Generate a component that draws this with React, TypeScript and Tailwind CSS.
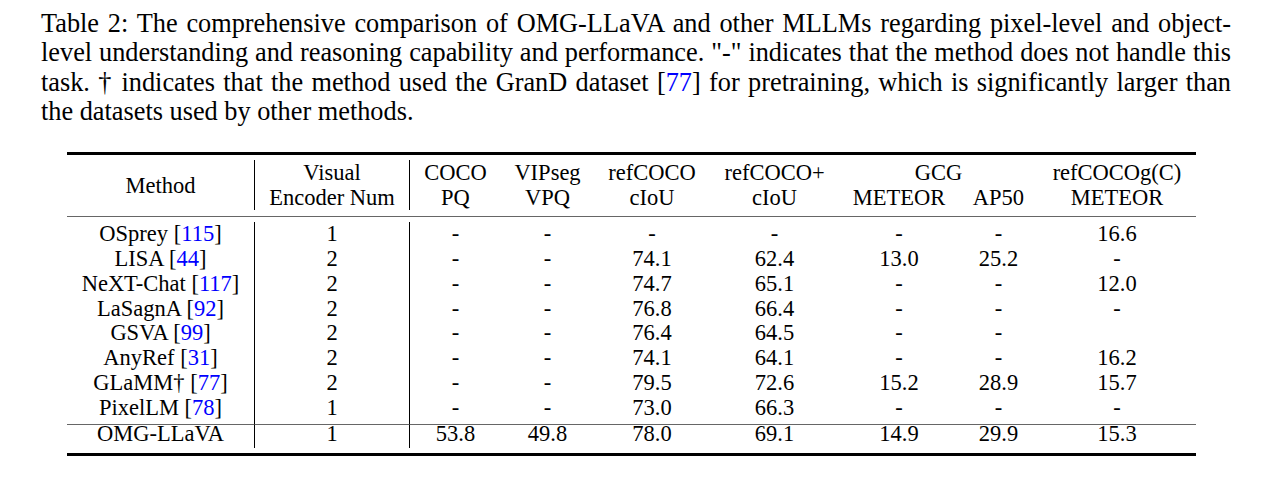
import React from 'react';

const cols = "grid grid-cols-[188px_155px_91px_93px_116px_129px_120px_79px_158px]";

type Row = { name: string; cite?: string; vals: string[] };

const rows: Row[] = [
  { name: "OSprey", cite: "115", vals: ["1", "-", "-", "-", "-", "-", "-", "16.6"] },
  { name: "LISA", cite: "44", vals: ["2", "-", "-", "74.1", "62.4", "13.0", "25.2", "-"] },
  { name: "NeXT-Chat", cite: "117", vals: ["2", "-", "-", "74.7", "65.1", "-", "-", "12.0"] },
  { name: "LaSagnA", cite: "92", vals: ["2", "-", "-", "76.8", "66.4", "-", "-", "-"] },
  { name: "GSVA", cite: "99", vals: ["2", "-", "-", "76.4", "64.5", "-", "-", ""] },
  { name: "AnyRef", cite: "31", vals: ["2", "-", "-", "74.1", "64.1", "-", "-", "16.2"] },
  { name: "GLaMM†", cite: "77", vals: ["2", "-", "-", "79.5", "72.6", "15.2", "28.9", "15.7"] },
  { name: "PixelLM", cite: "78", vals: ["1", "-", "-", "73.0", "66.3", "-", "-", "-"] },
];

const ours: Row = { name: "OMG-LLaVA", vals: ["1", "53.8", "49.8", "78.0", "69.1", "14.9", "29.9", "15.3"] };

function Cite({ n }: { n: string }) {
  return (
    <>
      [<span className="text-[#0000ff]">{n}</span>]
    </>
  );
}

export default function App() {
  return (
    <div className="bg-white min-h-[480px] font-['Liberation_Serif',serif] text-black">
      {/* Caption */}
      <div className="pt-[9px] pl-[41px] w-[1231px] text-[26.3px] leading-[29.3px]">
        <div className="text-justify [text-align-last:justify]">
          Table 2: The comprehensive comparison of OMG-LLaVA and other MLLMs regarding pixel-level and object-
        </div>
        <div className="text-justify [text-align-last:justify]">
          level understanding and reasoning capability and performance. "-" indicates that the method does not handle this
        </div>
        <div className="text-justify [text-align-last:justify]">
          task. † indicates that the method used the GranD dataset <Cite n="77" /> for pretraining, which is significantly larger than
        </div>
        <div>the datasets used by other methods.</div>
      </div>

      {/* Table */}
      <div className="mt-[26px] ml-[67px] w-[1129px] text-[22.5px]">
        <div className="h-[3px] bg-black" />

        <div className={`${cols} grid-rows-[25px_25px] leading-[25px] pt-[5px] pb-[5.5px] text-center`}>
          <div className="row-span-2 flex items-center justify-center border-r border-black">Method</div>
          <div className="row-span-2 flex flex-col items-center justify-center border-r border-black">
            <span>Visual</span>
            <span>Encoder Num</span>
          </div>
          <div className="row-span-2">COCO<br />PQ</div>
          <div className="row-span-2">VIPseg<br />VPQ</div>
          <div className="row-span-2">refCOCO<br />cIoU</div>
          <div className="row-span-2">refCOCO+<br />cIoU</div>
          <div className="col-span-2">GCG</div>
          <div className="row-span-2">refCOCOg(C)<br />METEOR</div>
          <div>METEOR</div>
          <div>AP50</div>
        </div>

        <div className="h-[1.5px] bg-[#666]" />

        <div className={`${cols} pt-[5px] pb-[5px] text-center`}>
          {rows.map((r, i) => {
            const last = i === rows.length - 1;
            const cell = `leading-[24.8px] ${last ? "pb-[3px]" : ""}`;
            return (
              <React.Fragment key={r.name}>
                <div className={`${cell} border-r border-black`}>
                  {r.name} <Cite n={r.cite!} />
                </div>
                {r.vals.map((v, j) => (
                  <div key={j} className={`${cell} ${j === 0 ? "border-r border-black" : ""}`}>
                    {v}
                  </div>
                ))}
              </React.Fragment>
            );
          })}
          <div className="leading-[18px] pb-[5px] border-t-[1.5px] border-t-[#666] border-r border-r-black">
            {ours.name}
          </div>
          {ours.vals.map((v, j) => (
            <div
              key={j}
              className={`leading-[18px] pb-[5px] border-t-[1.5px] border-t-[#666] ${j === 0 ? "border-r border-r-black" : ""}`}
            >
              {v}
            </div>
          ))}
        </div>

        <div className="h-[3px] bg-black" />
      </div>
    </div>
  );
}
